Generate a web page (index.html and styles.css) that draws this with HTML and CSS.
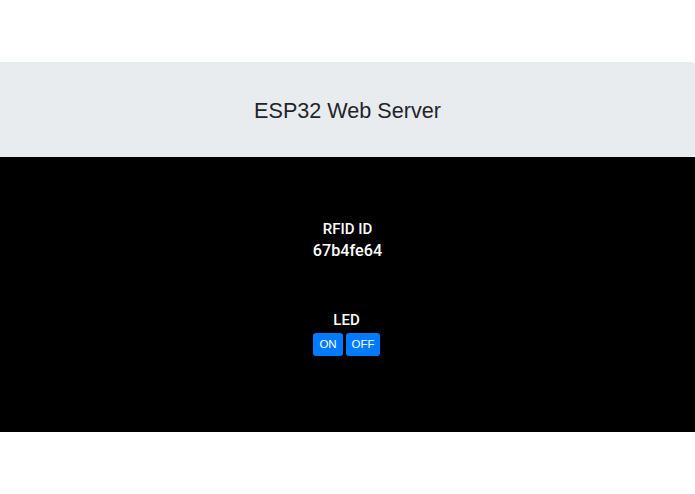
FILE: index.html
```html
<!DOCTYPE html>
<html>
<head>
<meta charset="utf-8">
<link rel="stylesheet" href="styles.css">
</head>
<body>
<div class="page">
  <header class="jumbo">
    <h1 class="title">ESP32 Web Server</h1>
  </header>
  <main class="panel">
    <div class="label">RFID ID</div>
    <div class="value">67b4fe64</div>
    <div class="label led">LED</div>
    <div class="btns">
      <button class="btn btn-on">ON</button>
      <button class="btn btn-off">OFF</button>
    </div>
  </main>
</div>
</body>
</html>
```
FILE: styles.css
```css
html, body {
  margin: 0;
  padding: 0;
  background: #ffffff;
}
.page {
  font-family: "Liberation Sans", Arial, sans-serif;
  padding-top: 62px;
}
.jumbo {
  background: #e9ecef;
  height: 95px;
  display: flex;
  align-items: center;
  justify-content: center;
  border-top-right-radius: 4px;
  border-bottom-right-radius: 4px;
}
.title {
  margin: 0;
  font-size: 21.6px;
  font-weight: 400;
  color: #212529;
  line-height: 26px;
  padding-top: 2px;
}
.panel {
  background: #000000;
  height: 275px;
  box-sizing: border-box;
  padding-top: 62px;
  display: flex;
  flex-direction: column;
  align-items: center;
  color: #ffffff;
  font-family: Roboto, "Liberation Sans", sans-serif;
}
.label {
  font-size: 15px;
  font-weight: 500;
  line-height: 20px;
}
.value {
  font-size: 16.2px;
  font-weight: 500;
  line-height: 22px;
  margin-top: 1px;
}
.led {
  margin-top: 48px;
  margin-right: 2px;
}
.btns {
  display: flex;
  gap: 3px;
  margin-top: 3px;
  margin-right: 2px;
}
.btn {
  font-family: "Liberation Sans", Arial, sans-serif;
  background: #007bff;
  color: #ffffff;
  border: none;
  border-radius: 3px;
  font-size: 11.5px;
  height: 23px;
  padding: 0;
  line-height: 23px;
}
.btn-on {
  width: 30px;
}
.btn-off {
  width: 34px;
}
```
